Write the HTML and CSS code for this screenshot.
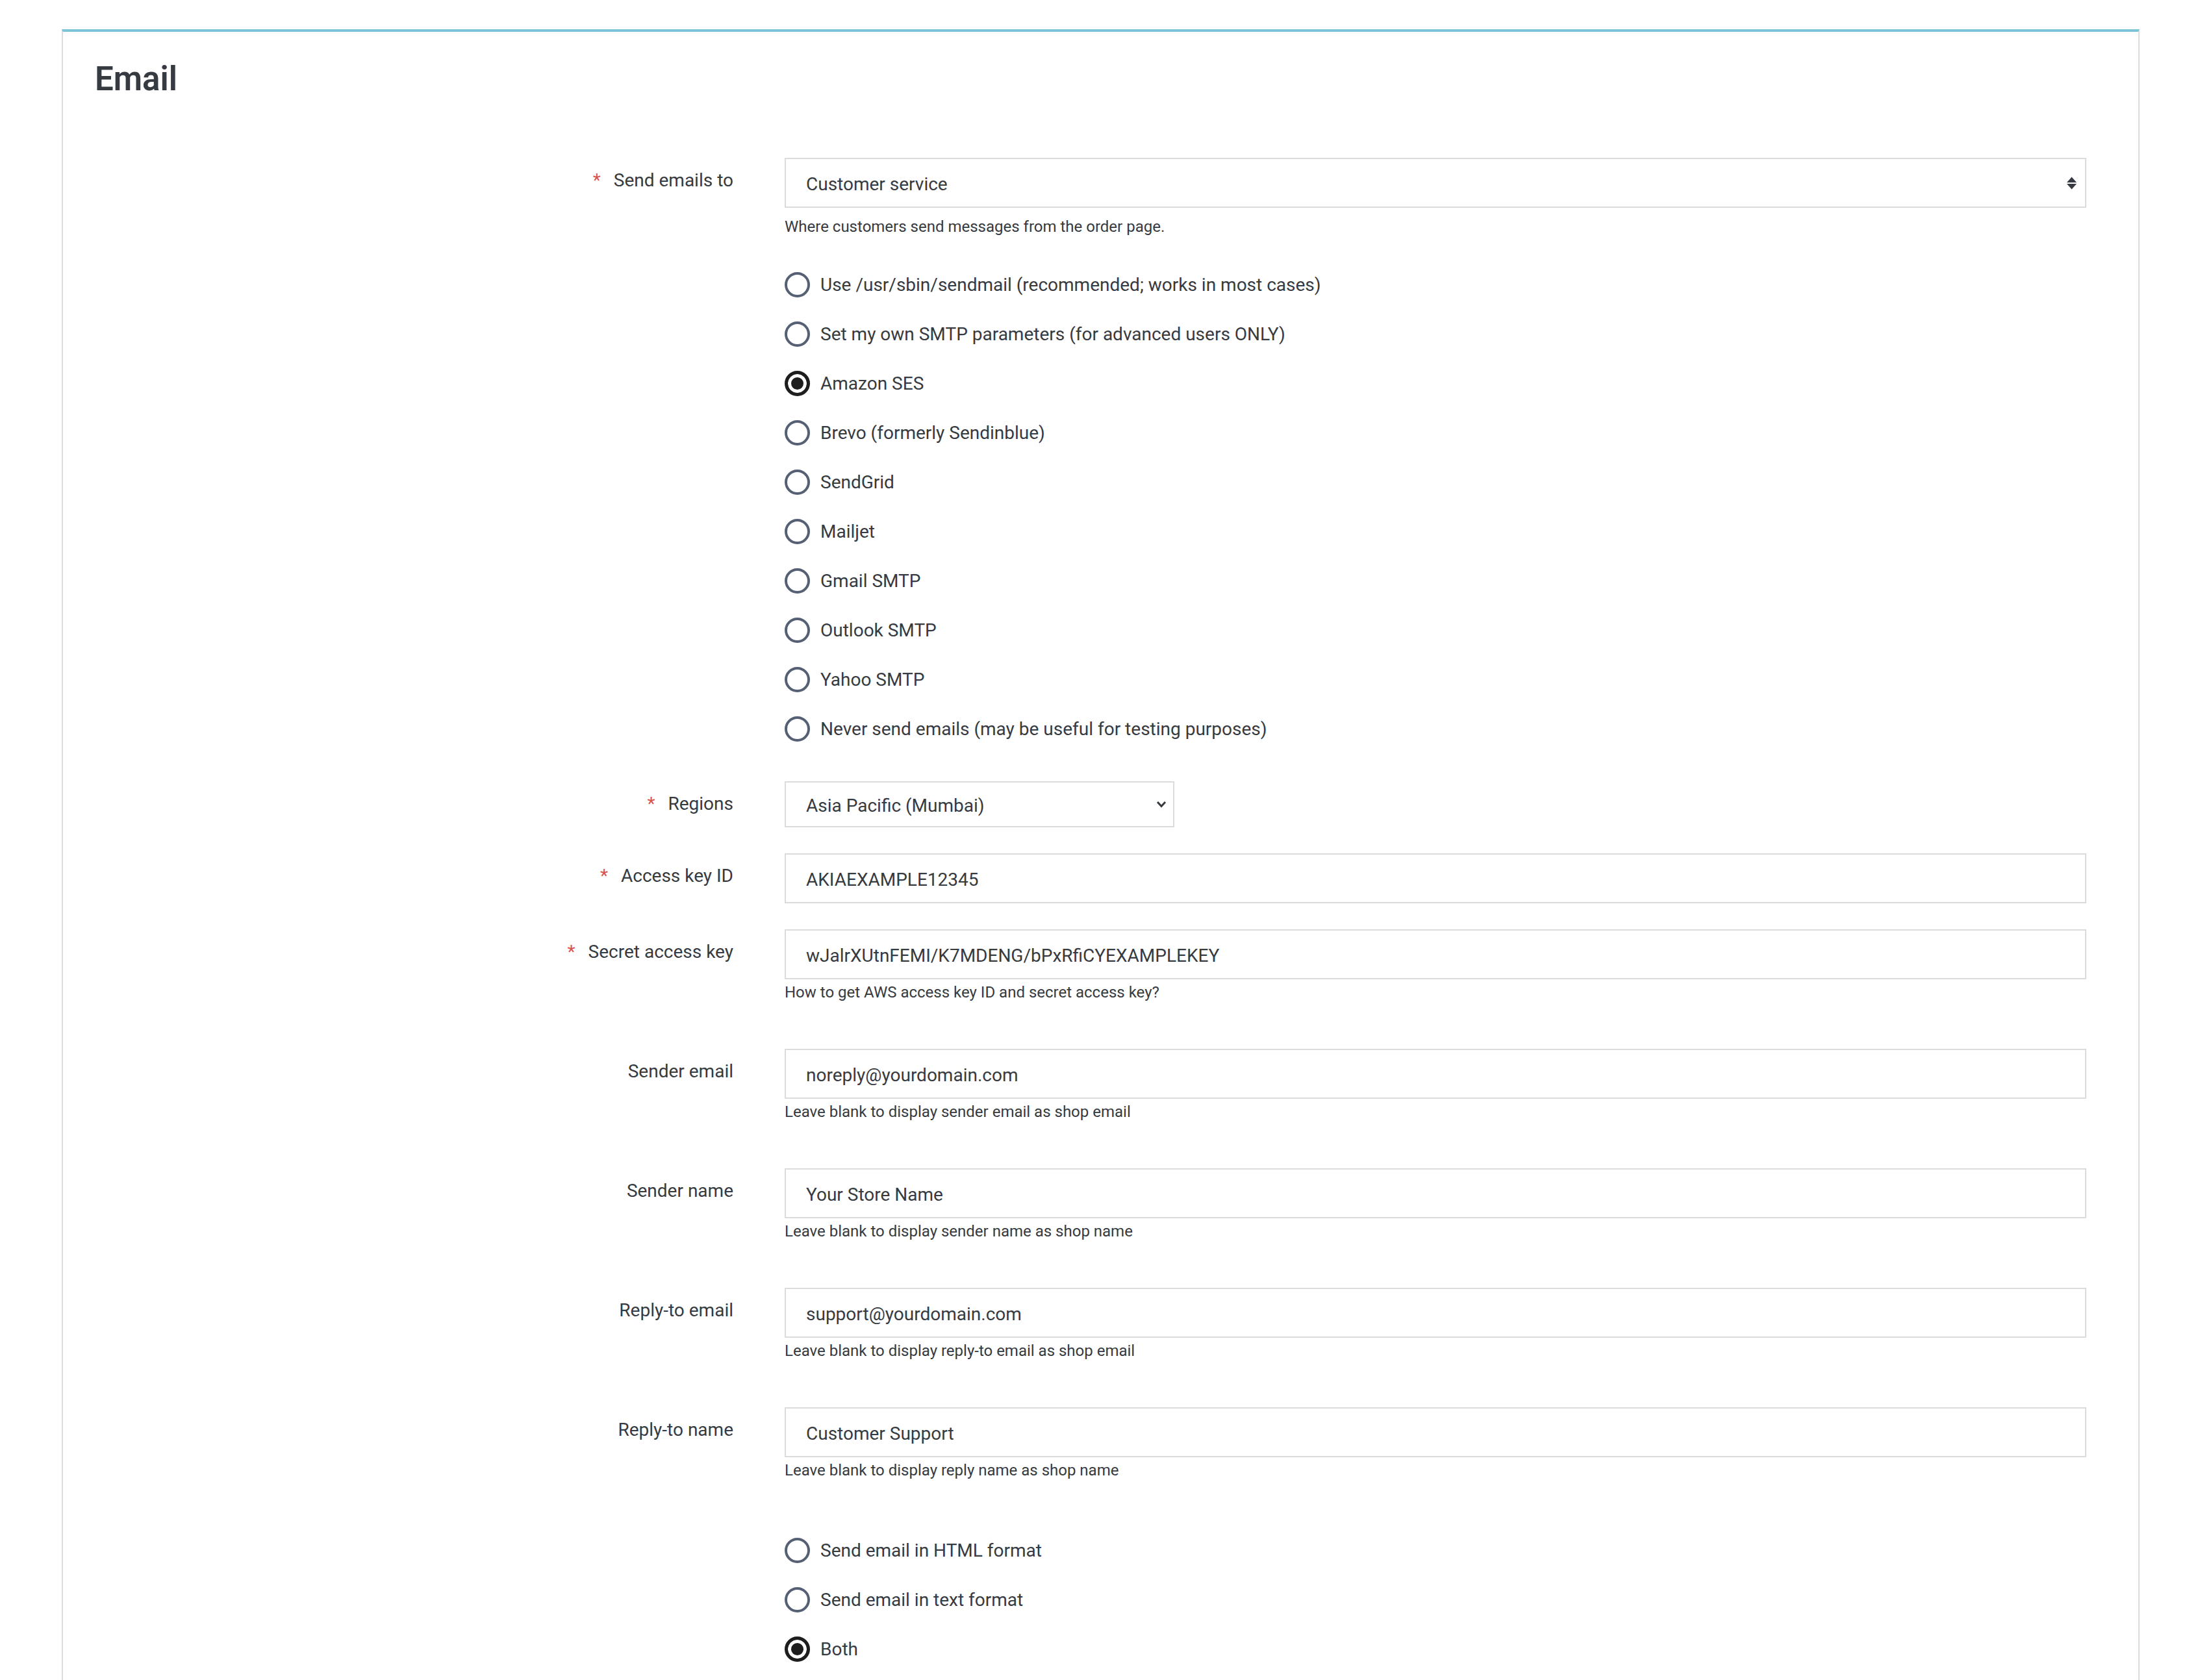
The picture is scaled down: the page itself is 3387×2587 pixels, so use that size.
FILE: index.html
```html
<!DOCTYPE html>
<html>
<head>
  <title>Email settings</title>
  <link rel="stylesheet" href="styles.css">
</head>
<body>
  <div class="panel">
    <h3 class="panel-title">Email</h3>

    <div class="form-group group-first">
      <label class="control-label"><span class="req">*</span>Send emails to</label>
      <div class="field">
        <div class="select-wrap">
          <select class="form-control">
            <option>Customer service</option>
          </select>
          <svg class="sort-icon" width="15" height="20" viewBox="0 0 15 20">
            <polygon points="0,9 7.5,0.5 15,9" fill="#363a41"/>
            <polygon points="0,11 15,11 7.5,19.5" fill="#363a41"/>
          </svg>
        </div>
        <p class="help-block help-first">Where customers send messages from the order page.</p>
      </div>
    </div>

    <div class="form-group radio-group">
      <div></div>
      <div class="field">
        <label class="radio"><input type="radio" name="method">Use /usr/sbin/sendmail (recommended; works in most cases)</label>
        <label class="radio"><input type="radio" name="method">Set my own SMTP parameters (for advanced users ONLY)</label>
        <label class="radio"><input type="radio" name="method" checked>Amazon SES</label>
        <label class="radio"><input type="radio" name="method">Brevo (formerly Sendinblue)</label>
        <label class="radio"><input type="radio" name="method">SendGrid</label>
        <label class="radio"><input type="radio" name="method">Mailjet</label>
        <label class="radio"><input type="radio" name="method">Gmail SMTP</label>
        <label class="radio"><input type="radio" name="method">Outlook SMTP</label>
        <label class="radio"><input type="radio" name="method">Yahoo SMTP</label>
        <label class="radio"><input type="radio" name="method">Never send emails (may be useful for testing purposes)</label>
      </div>
    </div>

    <div class="form-group">
      <label class="control-label"><span class="req">*</span>Regions</label>
      <div class="field">
        <div class="select-wrap select-small">
          <select class="form-control">
            <option>Asia Pacific (Mumbai)</option>
          </select>
          <svg class="chevron-icon" width="16" height="11" viewBox="0 0 16 11">
            <polyline points="2,2 8,8.5 14,2" fill="none" stroke="#363a41" stroke-width="3"/>
          </svg>
        </div>
      </div>
    </div>

    <div class="form-group">
      <label class="control-label"><span class="req">*</span>Access key ID</label>
      <div class="field">
        <input type="text" class="form-control" value="AKIAEXAMPLE12345">
      </div>
    </div>

    <div class="form-group">
      <label class="control-label"><span class="req">*</span>Secret access key</label>
      <div class="field">
        <input type="text" class="form-control" value="wJalrXUtnFEMI/K7MDENG/bPxRfiCYEXAMPLEKEY">
        <p class="help-block">How to get AWS access key ID and secret access key?</p>
      </div>
    </div>

    <div class="form-group">
      <label class="control-label">Sender email</label>
      <div class="field">
        <input type="text" class="form-control" value="noreply@yourdomain.com">
        <p class="help-block">Leave blank to display sender email as shop email</p>
      </div>
    </div>

    <div class="form-group">
      <label class="control-label">Sender name</label>
      <div class="field">
        <input type="text" class="form-control" value="Your Store Name">
        <p class="help-block">Leave blank to display sender name as shop name</p>
      </div>
    </div>

    <div class="form-group">
      <label class="control-label">Reply-to email</label>
      <div class="field">
        <input type="text" class="form-control" value="support@yourdomain.com">
        <p class="help-block">Leave blank to display reply-to email as shop email</p>
      </div>
    </div>

    <div class="form-group">
      <label class="control-label">Reply-to name</label>
      <div class="field">
        <input type="text" class="form-control" value="Customer Support">
        <p class="help-block help-last">Leave blank to display reply name as shop name</p>
      </div>
    </div>

    <div class="form-group radio-group">
      <div></div>
      <div class="field">
        <label class="radio"><input type="radio" name="format">Send email in HTML format</label>
        <label class="radio"><input type="radio" name="format">Send email in text format</label>
        <label class="radio"><input type="radio" name="format" checked>Both</label>
      </div>
    </div>
  </div>
</body>
</html>
```

FILE: styles.css
```css
body {
  margin: 0;
  padding: 0;
  background-color: #fff;
  font-family: Roboto, "Liberation Sans", sans-serif;
  color: #363a41;
}

.panel {
  width: 3199px;
  margin: 45px 0 0 95px;
  padding: 44px 80px 60px 47px;
  box-sizing: border-box;
  border: 2px solid #dcdcdc;
  border-top: 4px solid #7cc4d9;
  background-color: #fff;
}

.panel-title {
  margin: 0 0 92px 2px;
  font-size: 51px;
  line-height: 58px;
  font-weight: 600;
  color: #363a41;
}

.form-group {
  display: grid;
  grid-template-columns: 985px 1fr;
  column-gap: 79px;
  margin-bottom: 40px;
}

.group-first {
  margin-bottom: 34px;
}

.radio-group {
  margin-bottom: 43px;
}

.control-label {
  display: block;
  text-align: right;
  padding-top: 17px;
  font-size: 28px;
  line-height: 36px;
  color: #363a41;
}

.req {
  color: #d9534f;
  margin-right: 20px;
}

.form-control {
  display: block;
  width: 100%;
  height: 77px;
  padding: 3px 31px 0;
  box-sizing: border-box;
  border: 2px solid #dbdbdb;
  border-radius: 0;
  background-color: #fff;
  font-family: inherit;
  font-size: 28px;
  color: #363a41;
  outline: none;
}

select.form-control {
  appearance: none;
  -webkit-appearance: none;
}

.select-wrap {
  position: relative;
}

.select-small {
  width: 600px;
}

.select-small .form-control {
  height: 71px;
}

.sort-icon {
  position: absolute;
  right: 15px;
  top: 29px;
}

.chevron-icon {
  position: absolute;
  right: 12px;
  top: 30px;
}

.help-block {
  margin: 3px 0 30px;
  font-size: 24px;
  line-height: 34px;
  color: #363a41;
}

.help-first {
  margin: 12px 0 0;
}

.help-last {
  margin-bottom: 28px;
}

.radio {
  display: flex;
  align-items: center;
  gap: 16px;
  height: 76px;
  font-size: 28px;
  color: #363a41;
}

.radio input[type="radio"] {
  appearance: none;
  -webkit-appearance: none;
  flex: none;
  width: 39px;
  height: 39px;
  margin: 0;
  box-sizing: border-box;
  border: 4px solid #566074;
  border-radius: 50%;
  background-color: #fff;
}

.radio input[type="radio"]:checked {
  border: 5px solid #1e1e1e;
  background-color: #1e1e1e;
  box-shadow: inset 0 0 0 5px #fff;
}
```
